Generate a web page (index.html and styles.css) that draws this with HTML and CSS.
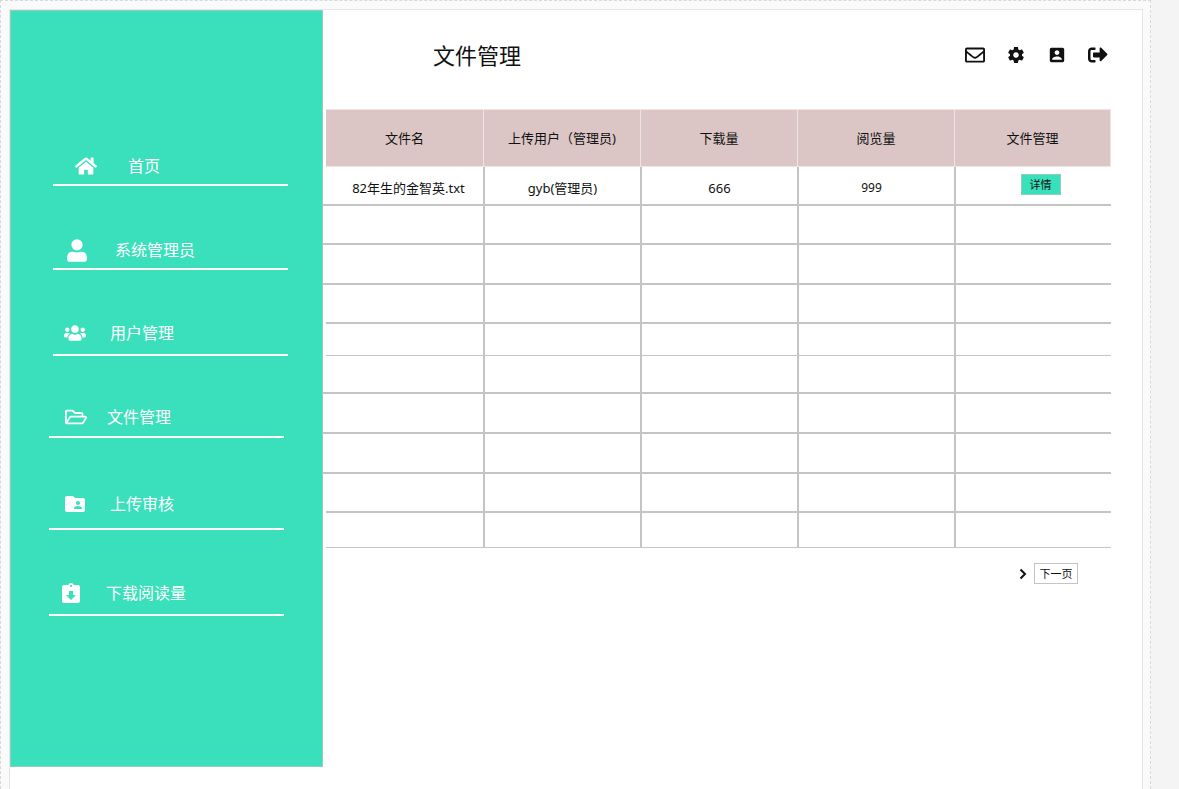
FILE: index.html
```html
<!DOCTYPE html>
<html lang="zh-CN">
<head>
<meta charset="utf-8">
<meta name="viewport" content="width=device-width, initial-scale=1">
<title>文件管理</title>
<link rel="stylesheet" href="styles.css">
</head>
<body>
<div class="canvas">
  <div class="page">
    <nav class="sidebar" aria-label="主导航">
      <ul class="nav">
        <li><a class="nav-link home" href="#home">
          <svg class="icon" viewBox="0 0 576 512"><path d="M280.37 148.26L96 300.11V464a16 16 0 0 0 16 16l112.06-.29a16 16 0 0 0 15.92-16V368a16 16 0 0 1 16-16h64a16 16 0 0 1 16 16v95.64a16 16 0 0 0 16 16.05L464 480a16 16 0 0 0 16-16V300L295.67 148.26a12.19 12.19 0 0 0-15.3 0zM571.6 251.47L488 182.56V44.05a12 12 0 0 0-12-12h-56a12 12 0 0 0-12 12v72.61L318.47 43a48 48 0 0 0-61 0L4.34 251.47a12 12 0 0 0-1.6 16.9l25.5 31A12 12 0 0 0 45.15 301l235.22-193.74a12.19 12.19 0 0 1 15.3 0L530.9 301a12 12 0 0 0 16.9-1.6l25.5-31a12 12 0 0 0-1.7-16.93z"/></svg>
          <span>首页</span></a></li>
        <li><a class="nav-link admin" href="#admin">
          <svg class="icon tall" viewBox="0 0 20 23"><ellipse cx="10" cy="5.8" rx="5.6" ry="5.6"/><path d="M0 19.4c0-4.4 2-6.7 5.2-6.7 1.5 0 2.6.7 4.8.7s3.300-.7 4.800-.7c3.200 0 5.200 2.300 5.200 6.700 0 2.200-1 3.400-2.800 3.400H2.800C1 22.800 0 21.600 0 19.400z"/></svg>
          <span>系统管理员</span></a></li>
        <li><a class="nav-link users" href="#users">
          <svg class="icon" viewBox="0 0 640 512"><path d="M96 224c35.300 0 64-28.700 64-64s-28.700-64-64-64-64 28.700-64 64 28.700 64 64 64zm448 0c35.300 0 64-28.700 64-64s-28.700-64-64-64-64 28.700-64 64 28.700 64 64 64zm32 32h-64c-17.600 0-33.500 7.100-45.100 18.600 40.300 22.100 68.900 62 75.100 109.400h66c17.700 0 32-14.300 32-32v-32c0-35.300-28.700-64-64-64zm-256 0c61.900 0 112-50.100 112-112S381.900 32 320 32 208 82.100 208 144s50.100 112 112 112zm76.800 32h-8.300c-20.800 10-43.900 16-68.500 16s-47.600-6-68.500-16h-8.300C179.600 288 128 339.600 128 403.200V432c0 26.500 21.500 48 48 48h288c26.500 0 48-21.500 48-48v-28.800c0-63.600-51.600-115.200-115.200-115.200zm-223.700-13.400C161.500 263.100 145.600 256 128 256H64c-35.300 0-64 28.700-64 64v32c0 17.700 14.300 32 32 32h65.900c6.300-47.400 34.900-87.300 75.200-109.400z"/></svg>
          <span>用户管理</span></a></li>
        <li><a class="nav-link files" href="#files" aria-current="page">
          <svg class="icon" viewBox="0 0 576 512"><path d="M527.900 224H480v-48c0-26.500-21.500-48-48-48H272l-64-64H48C21.500 64 0 85.500 0 112v288c0 26.500 21.500 48 48 48h400c16.500 0 31.900-8.500 40.700-22.600l79.900-128c20-31.900-3-73.400-40.700-73.400zM48 118c0-3.300 2.700-6 6-6h134.100l64 64H426c3.300 0 6 2.700 6 6v42H152c-16.800 0-32.400 8.800-41.100 23.200L48 351.400zm400 282H72l77.200-128H528z"/></svg>
          <span>文件管理</span></a></li>
        <li><a class="nav-link audit" href="#audit">
          <svg class="icon" viewBox="2 3 20 18"><path d="M20 6h-8l-2-2H4c-1.100 0-1.990.9-1.990 2L2 18c0 1.100.9 2 2 2h16c1.100 0 2-.9 2-2V8c0-1.100-.9-2-2-2zm-5 3c1.100 0 2 .9 2 2s-.9 2-2 2-2-.9-2-2 .9-2 2-2zm4 8h-8v-1c0-1.330 2.670-2 4-2s4 .67 4 2v1z"/></svg>
          <span>上传审核</span></a></li>
        <li><a class="nav-link stats" href="#stats">
          <svg class="icon" viewBox="3 1 18 20"><path d="M19 3h-4.180C14.400 1.840 13.300 1 12 1c-1.300 0-2.400.84-2.820 2H5c-1.100 0-2 .9-2 2v14c0 1.100.9 2 2 2h14c1.100 0 2-.9 2-2V5c0-1.100-.9-2-2-2zm-7 0c.55 0 1 .45 1 1s-.45 1-1 1-1-.45-1-1 .45-1 1-1zm0 15l-5-5h3V9h4v4h3l-5 5z"/></svg>
          <span>下载阅读量</span></a></li>
      </ul>
    </nav>
    <main class="main">
      <header class="header">
        <h1 class="title">文件管理</h1>
        <div class="tools">
          <button class="tool" type="button" aria-label="消息"><svg class="tool-icon" viewBox="0 0 512 512"><path d="M464 64H48C21.490 64 0 85.490 0 112v288c0 26.510 21.490 48 48 48h416c26.510 0 48-21.490 48-48V112c0-26.510-21.490-48-48-48zm0 48v40.805c-22.422 18.259-58.168 46.651-134.587 106.490-16.841 13.247-50.201 45.072-73.413 44.701-23.208.375-56.579-31.459-73.413-44.701C106.180 199.465 70.425 171.067 48 152.805V112h416zM48 400V214.398c22.914 18.251 55.409 43.862 104.938 82.646 21.857 17.205 60.134 55.186 103.062 54.955 42.717.231 80.509-37.199 103.053-54.947 49.528-38.783 82.032-64.401 104.947-82.653V400H48z"/></svg></button>
          <button class="tool" type="button" aria-label="设置"><svg class="tool-icon" viewBox="2 2 20 20"><path d="M19.430 12.980c.04-.32.07-.64.07-.98s-.03-.66-.07-.98l2.110-1.650c.19-.15.24-.42.12-.64l-2-3.460c-.12-.22-.39-.3-.61-.22l-2.490 1c-.52-.4-1.080-.73-1.690-.98l-.38-2.650C14.460 2.180 14.250 2 14 2h-4c-.25 0-.46.18-.49.42l-.38 2.650c-.61.25-1.170.59-1.690.98l-2.490-1c-.23-.09-.49 0-.61.22l-2 3.460c-.13.22-.07.49.12.64l2.110 1.650c-.04.32-.07.65-.07.98s.03.66.07.98l-2.110 1.650c-.19.15-.24.42-.12.64l2 3.460c.12.22.39.3.61.22l2.490-1c.52.4 1.080.73 1.690.98l.38 2.650c.03.24.24.42.49.42h4c.25 0 .46-.18.49-.42l.38-2.650c.61-.25 1.170-.59 1.690-.98l2.490 1c.23.09.49 0 .61-.22l2-3.460c.12-.22.07-.49-.12-.64l-2.110-1.650zM12 15.500c-1.930 0-3.500-1.570-3.500-3.500s1.570-3.500 3.500-3.500 3.500 1.570 3.500 3.500-1.570 3.500-3.500 3.500z"/></svg></button>
          <button class="tool" type="button" aria-label="个人信息"><svg class="tool-icon" viewBox="2 2 20 20"><path d="M3 5v14c0 1.100.89 2 2 2h14c1.100 0 2-.9 2-2V5c0-1.100-.9-2-2-2H5c-1.110 0-2 .9-2 2zm12 4c0 1.660-1.340 3-3 3s-3-1.340-3-3 1.340-3 3-3 3 1.340 3 3zm-9 8c0-2 4-3.100 6-3.100s6 1.100 6 3.100v1H6v-1z"/></svg></button>
          <button class="tool" type="button" aria-label="退出"><svg class="tool-icon" viewBox="0 0 512 512"><path d="M180 448H96c-53 0-96-43-96-96V160c0-53 43-96 96-96h84c6.600 0 12 5.400 12 12v40c0 6.600-5.400 12-12 12H96c-17.700 0-32 14.300-32 32v192c0 17.700 14.300 32 32 32h84c6.600 0 12 5.400 12 12v40c0 6.600-5.400 12-12 12zm117.900-303.100l.1 47.100H152c-13.300 0-24 10.700-24 24v80c0 13.300 10.700 24 24 24h146v72c0 21.400 25.900 32.100 41 17l152-152c9.300-9.300 9.300-24.500 0-33.800L339 71c-15.100-15.100-41-4.400-41 17z"/></svg></button>
        </div>
      </header>
      <table class="files-table">
        <thead>
          <tr><th scope="col">文件名</th><th scope="col">上传用户（管理员)</th><th scope="col">下载量</th><th scope="col">阅览量</th><th scope="col">文件管理</th></tr>
        </thead>
        <tbody>
          <tr class="row-39 data wide"><td class="file-name">82年生的金智英.txt</td><td>gyb(管理员)</td><td>666</td><td class="views">999</td><td class="action"><button class="detail" type="button">详情</button></td></tr>
          <tr class="row-39 wide"><td></td><td></td><td></td><td></td><td></td></tr>
          <tr class="row-40 wide"><td></td><td></td><td></td><td></td><td></td></tr>
          <tr class="row-39"><td></td><td></td><td></td><td></td><td></td></tr>
          <tr class="row-32"><td></td><td></td><td></td><td></td><td></td></tr>
          <tr class="row-38 wide"><td></td><td></td><td></td><td></td><td></td></tr>
          <tr class="row-40 wide"><td></td><td></td><td></td><td></td><td></td></tr>
          <tr class="row-40 wide"><td></td><td></td><td></td><td></td><td></td></tr>
          <tr class="row-39"><td></td><td></td><td></td><td></td><td></td></tr>
          <tr class="row-35"><td></td><td></td><td></td><td></td><td></td></tr>
        </tbody>
      </table>
      <div class="pager">
        <svg class="chevron" viewBox="0 0 8 12"><path d="M1.500 1.500L6 6L1.500 10.500"/></svg>
        <button class="next" type="button">下一页</button>
      </div>
    </main>
  </div>
</div>
</body>
</html>
```

FILE: styles.css
```css
* {
  box-sizing: border-box;
}

body {
  margin: 0;
  background: #f4f4f4;
  color: #111;
  font: 13px/20px "Noto Sans", "Noto Sans CJK SC", sans-serif;
}

button {
  font: inherit;
  color: inherit;
  cursor: pointer;
}

.canvas {
  display: flex;
  min-height: 100vh;
  margin-right: 28px;
  padding: 8px 7px 0 8px;
  background: #fafafa;
  border: 1px dashed #d8d8d8;
  border-bottom: 0;
}

.page {
  flex: 1;
  display: flex;
  align-items: flex-start;
  background: #fff;
  border: 1px solid #e6e6e6;
  border-bottom: 0;
}

/* Sidebar */

.sidebar {
  flex: 0 0 313px;
  padding: 138px 32px 150px 38px;
  background: #3adfbb;
  border: 1px solid #8fcdbd;
}

.nav {
  display: grid;
  grid-template-rows: 37px 84px 86px 82px 92px 86px;
  align-items: end;
  margin: 0;
  padding: 0;
  list-style: none;
}

.nav-link {
  display: flex;
  align-items: center;
  width: 235px;
  color: #fff;
  font-size: 16px;
  line-height: 24px;
  text-decoration: none;
  border-bottom: 2px solid #fff;
}

.icon {
  width: 22px;
  height: 20px;
  fill: currentColor;
}

.icon.tall {
  width: 20px;
  height: 23px;
}

.home,
.admin,
.users {
  margin-left: 4px;
  padding-bottom: 6px;
}

.home {
  gap: 31px;
  padding-left: 22px;
}

.admin {
  gap: 28px;
  padding-left: 14px;
}

.users {
  gap: 24px;
  padding-left: 11px;
  padding-bottom: 9px;
}

.files {
  gap: 20px;
  padding-left: 16px;
  padding-bottom: 7px;
}

.audit {
  gap: 24px;
  padding-left: 15px;
  padding-bottom: 12px;
}

.stats {
  gap: 24px;
  padding-left: 11px;
  padding-bottom: 9px;
}

.audit .icon {
  height: 18px;
}

/* Header */

.main {
  flex: 1;
  min-width: 0;
  padding: 0 31px 24px 3px;
}

.header {
  display: flex;
  align-items: center;
  justify-content: space-between;
  height: 99px;
  padding: 0 3px 9px 107px;
}

.title {
  margin: 0;
  font-size: 22px;
  font-weight: 400;
  line-height: 32px;
}

.tools {
  display: flex;
  gap: 21px;
}

.tool {
  display: flex;
  align-items: center;
  justify-content: center;
  width: 20px;
  height: 20px;
  padding: 0;
  background: none;
  border: 0;
}

.tool-icon {
  width: 20px;
  height: 20px;
  fill: currentColor;
}

.tool:nth-child(2) .tool-icon,
.tool:nth-child(3) .tool-icon {
  width: 16px;
  height: 16px;
}

/* Table */

.files-table {
  width: 100%;
  table-layout: fixed;
  border-collapse: separate;
  border-spacing: 0;
}

.files-table th {
  height: 58px;
  padding: 0;
  font-weight: 400;
  background: #dbc6c5;
  border: 1px solid #efe3e3;
  border-left-width: 0;
}

.files-table th + th {
  border-left-width: 1px;
}

.files-table th:not(:last-child) {
  border-right-width: 0;
}

.files-table td {
  position: relative;
  padding: 0;
  text-align: center;
  border-left: 2px solid #c4c4c4;
  border-bottom: 2px solid #c4c4c4;
}

.files-table td:first-child {
  border-left: 0;
}

.wide td:first-child::before {
  content: "";
  position: absolute;
  left: -3px;
  bottom: -2px;
  width: 3px;
  height: 2px;
  background: #c4c4c4;
}

.files-table .data td {
  padding-top: 4px;
}

.files-table .data .file-name {
  padding-left: 8px;
}

.files-table .views {
  padding-right: 10px;
  font-size: 12px;
}

.row-32 td { height: 32px; }
.row-35 td { height: 35px; }
.row-38 td { height: 38px; }
.row-39 td { height: 39px; }
.row-40 td { height: 40px; }

.files-table .row-32 td,
.files-table .row-35 td {
  border-bottom-width: 1px;
}

.files-table .data .action {
  padding: 7px 0 0 14px;
  vertical-align: top;
}

.detail {
  display: block;
  width: 40px;
  height: 21px;
  margin: 0 auto;
  padding: 0;
  background: #3adfbb;
  border: 1px solid #8fcdbd;
  font-size: 11px;
  line-height: 16px;
}

/* Pager */

.pager {
  display: flex;
  align-items: center;
  justify-content: flex-end;
  gap: 7px;
  padding: 15px 33px 0 0;
}

.chevron {
  width: 8px;
  height: 12px;
  fill: none;
  stroke: #111;
  stroke-width: 2;
}

.next {
  width: 44px;
  height: 21px;
  padding: 0;
  background: #fff;
  border: 1px solid #c4c4c4;
  font-size: 11px;
  line-height: 16px;
}
```
